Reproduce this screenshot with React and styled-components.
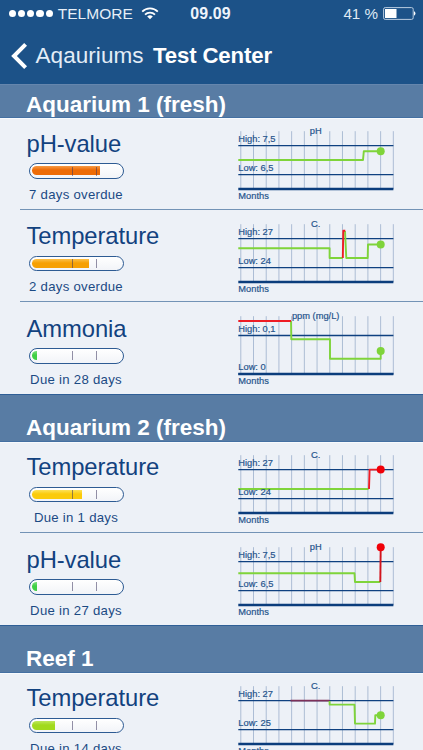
import React from 'react';
import styled, { createGlobalStyle } from 'styled-components';

const GlobalStyle = createGlobalStyle`
  * { box-sizing: border-box; }
  body {
    margin: 0;
    background: #edf1f7;
    font-family: "Liberation Sans", Arial, sans-serif;
    overflow: hidden;
  }
`;

const Screen = styled.div`
  display: flex;
  flex-direction: column;
  width: 423px;
  height: 750px;
  overflow: hidden;
  background: #edf1f7;
`;

const TopBar = styled.header`
  flex: none;
  height: 84px;
  background: #1c5288;
  color: #fff;
`;

const StatusBar = styled.div`
  display: grid;
  grid-template-columns: 1fr auto 1fr;
  align-items: center;
  height: 27px;
  padding: 0 7px 0 8.5px;
  font-size: 15.5px;
`;

const Carrier = styled.div`
  display: flex;
  align-items: center;
  color: #e6eef7;
`;

const Dots = styled.div`
  display: flex;
  gap: 1.9px;
  margin-right: 4.8px;
`;

const Dot = styled.span`
  width: 7.4px;
  height: 7.4px;
  border-radius: 50%;
  background: #fff;
`;

const WifiIcon = styled.svg`
  margin-left: 8.5px;
`;

const Clock = styled.div`
  margin-left: -3.4px;
  font-size: 15.9px;
  font-weight: 700;
  letter-spacing: 0.15px;
  color: #eef4fb;
`;

const Power = styled.div`
  display: flex;
  justify-content: flex-end;
  align-items: center;
  gap: 5px;
  font-size: 15.2px;
  color: #dfe9f4;
`;

const NavBar = styled.nav`
  display: flex;
  align-items: center;
  height: 57px;
  padding-left: 10px;
  font-size: 22.5px;
`;

const BackLabel = styled.span`
  margin: 0 9.5px 0 7.5px;
  letter-spacing: 0.06px;
  color: #e3edf7;
`;

const PageTitle = styled.span`
  font-size: 22.2px;
  font-weight: 700;
  letter-spacing: -0.15px;
`;

const List = styled.main`
  flex: none;
`;

const SectionHeader = styled.h2`
  position: relative;
  display: flex;
  align-items: flex-end;
  height: ${(p) => (p.$clipped ? 33.2 : 46.2)}px;
  margin: 0;
  padding: 0 0 1.6px 26px;
  background: #587ca4;
  border-top: 1px solid ${(p) => (p.$clipped ? '#6586ad' : '#2f5f96')};
  box-shadow: 0 1px 0 #4470a2, 0 2px 0 #f7fafd;
  color: #fff;
  font-size: 22.5px;
  font-weight: 700;
  line-height: 22px;
`;

const Row = styled.article`
  display: flex;
  height: 92.4px;
  margin-left: 20px;
  border-bottom: 1px solid ${(p) => (p.$last ? 'transparent' : '#7393b6')};
`;

const Info = styled.div`
  width: 210px;
  padding: 11.7px 0 0 6.5px;
`;

const Name = styled.h3`
  margin: 0;
  font-size: 23.8px;
  font-weight: 400;
  line-height: 30px;
  letter-spacing: -0.08px;
  color: #12427f;
`;

const Meter = styled.div`
  display: flex;
  flex-direction: column;
  align-items: center;
  width: 99px;
  margin-top: 4.4px;
`;

const Gauge = styled.div`
  position: relative;
  width: 95px;
  height: 15.5px;
  padding: 2.2px;
  border: 1.3px solid #2d5b93;
  border-radius: 8px;
  background: linear-gradient(#fff, #f2f4f8);
`;

const Fill = styled.div`
  width: ${(p) => p.$width}px;
  height: 9px;
  border-radius: 5px 0 0 5px;
  background: linear-gradient(${(p) => p.$from}, ${(p) => p.$to} 45%, ${(p) => p.$to});
`;

const Tick = styled.span`
  position: absolute;
  top: 2.4px;
  left: ${(p) => p.$left}px;
  width: 1.2px;
  height: 9px;
  background: rgba(60, 55, 95, 0.55);
`;

const DueText = styled.div`
  margin-top: 8px;
  font-size: 13.2px;
  line-height: 16px;
  letter-spacing: 0.27px;
  white-space: nowrap;
  color: #1b4a84;
`;

const ChartFrame = styled.svg`
  flex: none;
  display: block;
  font-size: 9.3px;
`;

const FILLS = {
  orange: ['#f79a45', '#ed6b06'],
  amber: ['#fcc04a', '#f6a003'],
  yellow: ['#fde258', '#fbcb0b'],
  lime: ['#bde75c', '#a1da1d'],
  green: ['#7be07d', '#3fcf45'],
};

const PH = { title: 'pH', titleX: 85.7, highY: 28.6, lowY: 57.6, high: '7,5', low: '6,5' };
const TEMP = { title: 'C.', titleX: 85.7, highY: 28.6, lowY: 57.6, high: '27', low: '24' };

const GREEN = '#7fd43a';
const RED = '#ee1c24';

const SECTIONS = [
  {
    title: 'Aquarium 1 (fresh)',
    tests: [
      {
        name: 'pH-value', due: '7 days overdue', tone: 'orange', fill: 68.5,
        chart: {
          ...PH,
          series: [[GREEN, '8.3,43 133,43 133.8,34.3 150.7,34.3']],
          end: [GREEN, 34.3],
        },
      },
      {
        name: 'Temperature', due: '2 days overdue', tone: 'amber', fill: 57,
        chart: {
          ...TEMP,
          series: [
            [GREEN, '8.3,38.2 99.6,38.2 99.6,48 112.7,48'],
            [GREEN, '115,21 116.3,48 137.7,48 138,34.5 150.7,34.5'],
            [RED, '112.8,48 113.3,20.8 115.3,20.8'],
          ],
          end: [GREEN, 34.5],
        },
      },
      {
        name: 'Ammonia', due: 'Due in 28 days', tone: 'green', fill: 5,
        chart: {
          title: 'ppm (mg/L)', titleX: 85.7, highY: 33.5, lowY: 72, high: '0,1', low: '0',
          series: [
            [GREEN, '61,19 61.3,37.3 100,37.3 100,56.7 150.7,56.7 150.7,49'],
            [RED, '8.3,19 61,19'],
          ],
          end: [GREEN, 49],
        },
      },
    ],
  },
  {
    title: 'Aquarium 2 (fresh)',
    tests: [
      {
        name: 'Temperature', due: 'Due in 1 days', tone: 'yellow', fill: 50,
        chart: {
          ...TEMP,
          series: [
            [GREEN, '8.3,48 138.5,48'],
            [RED, '139,48 139.6,28.6 150.7,28.6'],
          ],
          end: ['#f00008', 28.6],
        },
      },
      {
        name: 'pH-value', due: 'Due in 27 days', tone: 'green', fill: 5,
        chart: {
          ...PH,
          series: [
            [GREEN, '8.3,40.3 124.5,40.3 125,49 150.3,49'],
            ['#d3141c', '150.3,49 150.7,14.3'],
          ],
          end: ['#f00008', 14.3],
        },
      },
    ],
  },
  {
    title: 'Reef 1',
    tests: [
      {
        name: 'Temperature', due: 'Due in 14 days', tone: 'lime', fill: 23,
        chart: {
          ...TEMP,
          low: '25',
          series: [
            ['#7d3159', '60.5,28.6 99.6,28.6'],
            [GREEN, '99.6,29 99.6,32.6 124.5,32.6 125,51.6 145,51.6 145.3,43.3 150.7,43.3'],
          ],
          end: [GREEN, 43.3],
        },
      },
    ],
  },
];

const GRID_X = Array.from({ length: 13 }, (_, i) => 10.8 + i * 12.71);
const LEFT = 8.3;
const RIGHT = 163.4;
const INK = '#0f4180';
const LABEL = '#27558d';

function Chart({ chart }) {
  return (
    <ChartFrame width="173" height="91" viewBox="0 0 173 91">
      {GRID_X.map((x) => (
        <line key={x} x1={x} x2={x} y1="14.2" y2="72" stroke="#a5b7d0" strokeWidth="0.9" />
      ))}
      <line x1={LEFT} x2={RIGHT} y1={chart.highY} y2={chart.highY} stroke={INK} strokeWidth="1.4" />
      <line x1={LEFT} x2={RIGHT} y1={chart.lowY} y2={chart.lowY} stroke={INK} strokeWidth="1.4" />
      <line x1={LEFT} x2={RIGHT} y1="72" y2="72" stroke="#0b3d7c" strokeWidth="2.5" />
      {chart.series.map(([color, points]) => (
        <polyline
          key={points}
          points={points}
          fill="none"
          stroke={color}
          strokeWidth="1.9"
          strokeLinejoin="round"
        />
      ))}
      <circle cx="150.7" cy={chart.end[1]} r="4" fill={chart.end[0]} />
      <g fill={LABEL} stroke={LABEL} strokeWidth="0.2">
        <text x={chart.titleX} y="17" textAnchor="middle">{chart.title}</text>
        <text x={LEFT} y={chart.highY - 4}>High: {chart.high}</text>
        <text x={LEFT} y={chart.lowY - 3.9}>Low: {chart.low}</text>
        <text x={LEFT} y="82.2">Months</text>
      </g>
    </ChartFrame>
  );
}

function TestRow({ test, last }) {
  const [from, to] = FILLS[test.tone];
  return (
    <Row $last={last}>
      <Info>
        <Name>{test.name}</Name>
        <Meter>
          <Gauge>
            <Fill $width={test.fill} $from={from} $to={to} />
            <Tick $left={42.4} />
            <Tick $left={66} />
          </Gauge>
          <DueText>{test.due}</DueText>
        </Meter>
      </Info>
      <Chart chart={test.chart} />
    </Row>
  );
}

export default function App() {
  return (
    <>
      <GlobalStyle />
      <Screen>
        <TopBar>
          <StatusBar>
            <Carrier>
              <Dots>
                {[0, 1, 2, 3, 4].map((i) => <Dot key={i} />)}
              </Dots>
              TELMORE
              <WifiIcon width="18" height="13" viewBox="0 0 18 13" fill="none" stroke="#fff" strokeWidth="1.8">
                <path d="M1.2 4.6 A11 11 0 0 1 16.8 4.6" />
                <path d="M4 7.6 A7.1 7.1 0 0 1 14 7.6" />
                <path d="M9 12.3 L6.2 9.6 A4 4 0 0 1 11.8 9.6 Z" fill="#fff" stroke="none" />
              </WifiIcon>
            </Carrier>
            <Clock>09.09</Clock>
            <Power>
              41 %
              <svg width="33" height="13" viewBox="0 0 33 13">
                <rect x="0.6" y="0.6" width="29.6" height="11.8" rx="1.6" fill="none" stroke="#b9cce0" strokeWidth="1" />
                <rect x="2" y="2" width="11.5" height="9" fill="#fff" />
                <path d="M31 4.3 A2.4 2.4 0 0 1 31 8.7 Z" fill="#fff" />
              </svg>
            </Power>
          </StatusBar>
          <NavBar>
            <svg width="18" height="28" viewBox="0 0 18 28" fill="none" stroke="#fff" strokeWidth="4">
              <path d="M15.6 2.4 L4 14 L15.6 25.6" />
            </svg>
            <BackLabel>Aqauriums</BackLabel>
            <PageTitle>Test Center</PageTitle>
          </NavBar>
        </TopBar>
        <List>
          {SECTIONS.map((section, i) => (
            <section key={section.title}>
              <SectionHeader $clipped={i === 0}>{section.title}</SectionHeader>
              {section.tests.map((test, j) => (
                <TestRow key={test.name} test={test} last={j === section.tests.length - 1} />
              ))}
            </section>
          ))}
        </List>
      </Screen>
    </>
  );
}
